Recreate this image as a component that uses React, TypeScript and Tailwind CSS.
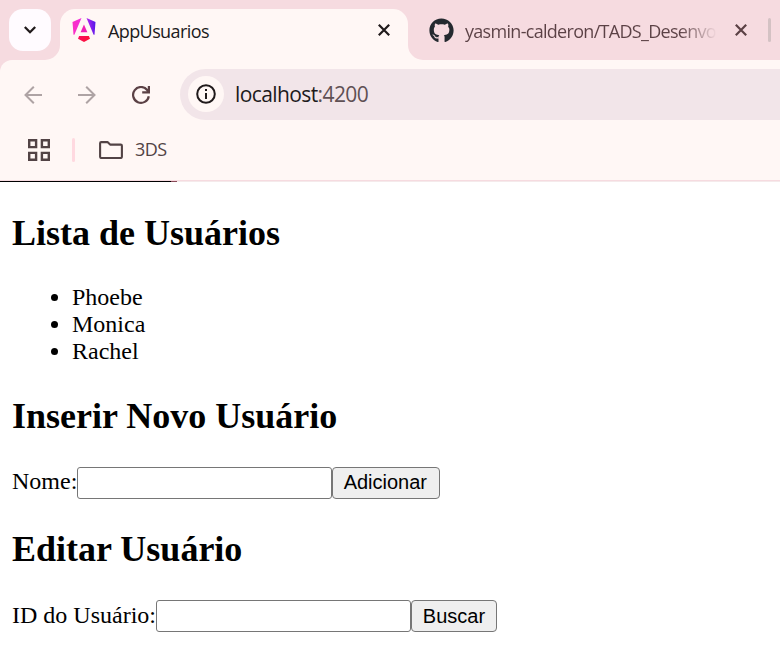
import React from "react";
import { FaGithub } from "react-icons/fa";

const ui = "font-['Open_Sans','Noto_Sans',sans-serif]";

function AngularLogo() {
  return (
    <svg className="block h-6 w-6 shrink-0" viewBox="0 0 24 24">
      <defs>
        <linearGradient id="shield" gradientUnits="userSpaceOnUse" x1="1" y1="10" x2="23" y2="8">
          <stop offset="0" stopColor="#fb2fc4" />
          <stop offset="0.45" stopColor="#f02be0" />
          <stop offset="0.75" stopColor="#9a22f0" />
          <stop offset="1" stopColor="#5a18e8" />
        </linearGradient>
        <linearGradient id="base" x1="0" y1="0" x2="1" y2="0.4">
          <stop offset="0" stopColor="#fb0b62" />
          <stop offset="1" stopColor="#fb1238" />
        </linearGradient>
      </defs>
      <path fill="url(#shield)" d="M14.5 0 21.6 16.8h.9L23.5 4 14.5 0ZM9.5 0 .5 4l1 12.8h.9L9.5 0Z" />
      <path fill="#f01fb4" d="M8.6 14.2h6.8L12 6.6 8.6 14.2Z" />
      <path fill="url(#base)" d="M16.9 18H7.1l-1.1 2.7L12 24l6-3.3L16.9 18Z" />
    </svg>
  );
}

function CloseIcon({ className }: { className: string }) {
  return (
    <svg className={`block h-3 w-3 shrink-0 ${className}`} viewBox="0 0 12 12" fill="none" stroke="currentColor" strokeWidth="2.2">
      <path d="M0.8 0.8 11.2 11.2M11.2 0.8 0.8 11.2" />
    </svg>
  );
}

function TabStrip() {
  return (
    <div className="flex h-[60px] items-start bg-[#f6dbe0] pt-[9px]">
      <div className="ml-[9px] flex h-[42px] w-[42px] shrink-0 items-center justify-center rounded-[14px] bg-[#fffbff]">
        <svg className="block h-[8px] w-[12px]" viewBox="0 0 12 8" fill="none" stroke="#201a1b" strokeWidth="2.3">
          <path d="m0.8 1 5.2 5.2L11.2 1" />
        </svg>
      </div>
      <div className="relative ml-[9px] flex h-[51px] w-[348px] shrink-0 rounded-t-[15px] bg-[#fff7f5] pl-3">
        <svg className="absolute bottom-0 -left-[15px] h-[15px] w-[15px]" viewBox="0 0 15 15">
          <path d="M15 0v15H0A15 15 0 0 0 15 0Z" fill="#fff7f5" />
        </svg>
        <svg className="absolute -right-[15px] bottom-0 h-[15px] w-[15px]" viewBox="0 0 15 15">
          <path d="M0 0v15h15A15 15 0 0 1 0 0Z" fill="#fff7f5" />
        </svg>
        <div className="mt-[9px]"><AngularLogo /></div>
        <span className={`${ui} mt-[9px] ml-3 w-[270px] text-[18px] leading-[26px] tracking-[-0.6px] text-[#201a1b]`}>AppUsuarios</span>
        <div className="mt-[15px]"><CloseIcon className="text-[#201a1b]" /></div>
      </div>
      <FaGithub className="mt-[9px] ml-[21px] h-[25px] w-[25px] shrink-0 text-[#24292f]" />
      <span className={`${ui} mt-[9px] ml-[11px] w-[252px] shrink-0 bg-linear-to-r from-[#5b4145] from-85% to-transparent bg-clip-text text-[18px] leading-[26px] tracking-[-0.7px] whitespace-nowrap text-transparent`}>
        yasmin-calderon/TADS_Desenvo
      </span>
      <div className="mt-[15px] ml-[18px]"><CloseIcon className="text-[#5b4145]" /></div>
      <div className="mt-[9px] ml-[21px] h-6 w-[3px] shrink-0 rounded-full bg-[#d4c2c4]" />
    </div>
  );
}

function Toolbar() {
  return (
    <div className="bg-[#f6dbe0]">
      <div className="flex h-[60px] items-start rounded-tl-[12px] bg-[#fff7f5] pt-[9px]">
        <svg className="mt-[17px] ml-6 block h-[18px] w-[18px] shrink-0" viewBox="0 0 18 18" fill="none" stroke="#aea3a4" strokeWidth="2">
          <path d="M18 9H1.5M9.8 0.7 1.5 9l8.3 8.3" />
        </svg>
        <svg className="mt-[17px] ml-9 block h-[18px] w-[18px] shrink-0" viewBox="0 0 18 18" fill="none" stroke="#aea3a4" strokeWidth="2">
          <path d="M0 9h16.5M8.2 0.7 16.5 9l-8.3 8.3" />
        </svg>
        <svg className="mt-[17px] ml-9 block h-[18px] w-[18px] shrink-0" viewBox="0 0 18 18" fill="none" stroke="#5b4145" strokeWidth="2.2">
          <path d="M16.8 10.2A7.9 7.9 0 1 1 15.2 4l1.3 1.6M16.9 0v6.3h-6.7" />
        </svg>
        <div className="ml-[30px] flex h-[51px] flex-1 items-start rounded-l-full bg-[#f2e5e9] pl-[8px]">
          <div className="mt-[7px] flex h-9 w-9 items-center justify-center rounded-full bg-[#fff7f5]">
            <svg className="block h-5 w-5" viewBox="0 0 20 20" fill="none" stroke="#201a1b" strokeWidth="2">
              <circle cx="10" cy="10" r="8.8" />
              <path d="M10 9v6M10 5v2" />
            </svg>
          </div>
          <span className={`${ui} mt-[11px] ml-[11px] text-[21px] leading-[29px] tracking-[-0.6px] text-[#201a1b]`}>
            localhost<span className="text-[#5f5054]">:4200</span>
          </span>
        </div>
      </div>
    </div>
  );
}

function BookmarksBar() {
  return (
    <div className="flex h-[60px] items-start bg-[#fff7f5]">
      <svg className="mt-[19px] ml-7 block h-[22px] w-[22px] shrink-0" viewBox="0 0 22 22" fill="none" stroke="#524345" strokeWidth="2.4">
        <path d="M1.2 1.2h6.9v6.9H1.2zM13.9 1.2h6.9v6.9h-6.9zM1.2 13.9h6.9v6.9H1.2zM13.9 13.9h6.9v6.9h-6.9z" />
      </svg>
      <div className="mt-[18px] ml-[22px] h-6 w-[3px] rounded-full bg-[#ffd9e0]" />
      <svg className="mt-[21px] ml-6 block h-[18px] w-6 shrink-0" viewBox="0 0 24 18" fill="none" stroke="#524345" strokeWidth="2.1" strokeLinejoin="round">
        <path d="M2.2 1.1h6.3l2.6 2.5h10.6q1.2 0 1.2 1.2v11q0 1.2-1.2 1.2H2.3q-1.2 0-1.2-1.2V2.3q0-1.2 1.1-1.2Z" />
      </svg>
      <span className={`${ui} mt-[16px] ml-3 text-[18px] leading-[26px] tracking-[-0.6px] text-[#524345]`}>3DS</span>
    </div>
  );
}

function Heading({ children }: { children: React.ReactNode }) {
  return <h2 className="text-[36px] leading-[41px] font-bold">{children}</h2>;
}

function Field({ label, action, labelClass, buttonClass }: { label: string; action: string; labelClass: string; buttonClass: string }) {
  return (
    <div className="flex h-8 items-start">
      <label className="flex items-start">
        <span className={`${labelClass} whitespace-nowrap`}>{label}</span>
        <input className="h-8 w-[255px] rounded-[3px] border border-[#767676] bg-white px-1 outline-none" />
      </label>
      <button className={`${buttonClass} h-8 rounded-[4px] border border-[#767676] bg-[#efefef] font-['Liberation_Sans',Arial,sans-serif] text-[20px] leading-[28px]`}>{action}</button>
    </div>
  );
}

export default function App() {
  return (
    <div className="h-[646px] w-[780px] overflow-hidden bg-white">
      <TabStrip />
      <Toolbar />
      <BookmarksBar />
      <div className="h-px bg-[#f6dbe0]" />
      <div className="flex h-px bg-[#f5eaeb]">
        <div className="w-[171px] bg-black" />
        <div className="w-[6px] bg-[#8a4a58]" />
      </div>
      <main className="pt-[31px] pl-3 font-['Liberation_Serif','Times_New_Roman',serif] text-[24px] leading-[27px] text-black">
        <Heading>Lista de Usuários</Heading>
        <ul className="mt-[30px] list-disc pl-[60px]">
          <li>Phoebe</li>
          <li>Monica</li>
          <li>Rachel</li>
        </ul>
        <div className="mt-[31px]"><Heading>Inserir Novo Usuário</Heading></div>
        <div className="mt-[30px]">
          <Field label="Nome:" action="Adicionar" labelClass="leading-[28px]" buttonClass="w-[108px] pb-[2px] pr-[2px]" />
        </div>
        <div className="mt-[30px]"><Heading>Editar Usuário</Heading></div>
        <div className="mt-[30px]">
          <Field label="ID do Usuário:" action="Buscar" labelClass="leading-[30px]" buttonClass="w-[86px]" />
        </div>
      </main>
    </div>
  );
}
